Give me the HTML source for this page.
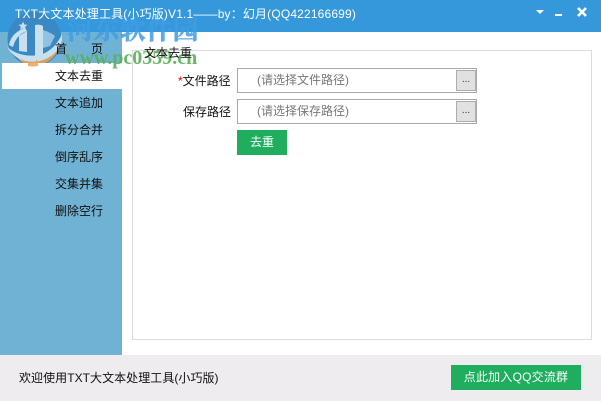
<!DOCTYPE html>
<html lang="zh">
<head>
<meta charset="utf-8">
<style>
*{box-sizing:border-box;margin:0;padding:0}
html,body{width:601px;height:401px;overflow:hidden;background:#fff}
body{position:relative;font-family:"Liberation Sans","Noto Sans CJK SC",sans-serif;font-size:12px;color:#111}
.a{position:absolute;white-space:nowrap;line-height:16px}
.input{position:absolute;left:237px;width:240px;height:25px;border:1px solid #a9a9a9;background:#fff}
.input span{position:absolute;left:19px;top:3px;line-height:16px;color:#777}
.input b{position:absolute;left:218px;top:1px;width:20px;height:21px;border:1px solid #adadad;background:#e1e1e1;font-weight:400;font-size:10px;line-height:17px;text-align:center;color:#333}
.nav{position:absolute;left:55px;line-height:16px;white-space:nowrap;color:#111}
.btn{position:absolute;background:#1fae5e;color:#fff;text-align:center}
</style>
</head>
<body>
<div style="position:absolute;left:0;top:0;width:601px;height:32px;background:#3498db"></div>
<div style="position:absolute;left:0;top:32px;width:122px;height:323px;background:#6fb2d3"></div>
<div style="position:absolute;left:0;top:355px;width:601px;height:46px;background:#eeecee"></div>
<div style="position:absolute;left:132px;top:50px;width:460px;height:290px;border:1px solid #dcdcdc"></div>

<svg style="position:absolute;left:0;top:0" width="70" height="70" viewBox="0 0 70 70">
<circle cx="34.500" cy="39" r="27" fill="#3a88c4"/>
<path d="M17 57Q40 68 60 44Q56 62 36 66Q24 67 17 57Z" fill="#d9a05a"/>
<path d="M7 47Q20 58 40 55Q55 50 62 34L62 40Q58 56 40 61Q18 65 7 47Z" fill="#c9e1ef"/>
<path d="M19 36L27 31L27 52L19 51Z" fill="#c9e1ef"/>
<path d="M35 25Q40 24 43 26L43 58L35 59Z" fill="#c9e1ef"/>
<path d="M9 45Q11 33 25 28L27 31Q16 35 13 47Z" fill="#c9e1ef"/>
<path d="M43 30Q52 33 55 36L50 46L43 48Z" fill="#8fc2e3"/>
<path d="M23 21.500l1.300 3 3.200.3-2.400 2 .8 3.200-2.900-1.700-2.900 1.700.8-3.200-2.400-2 3.200-.3z" fill="#c9e1ef"/>
<path d="M28 63Q36 63 37 59L38 66L28 66Z" fill="#e8a55e"/>
</svg>

<div style="position:absolute;left:2px;top:63px;width:120px;height:26px;background:#fff"></div>
<svg style="position:absolute;left:0;top:60px" width="70" height="10" viewBox="0 0 70 10">
<path d="M28 3L38 3L38 6Q33 7 28 6Z" fill="#f0b070"/>
</svg>

<div class="a" style="left:67px;top:16px;font:700 26px/30px 'Liberation Serif','Noto Serif CJK SC',serif;color:#3f9de4;opacity:.85;letter-spacing:.4px;-webkit-text-stroke:.6px #3f9de4">河东软件园</div>
<div class="a" style="left:65px;top:48px;font:700 20px/20px 'Liberation Serif',serif;color:#5cae5c;opacity:.9">www.pc0359.cn</div>

<div class="a" style="left:15px;top:6px;color:#fff;font-size:12px;letter-spacing:.16px">TXT大文本处理工具(小巧版)V1.1——by：幻月(QQ422166699)</div>

<svg style="position:absolute;left:530px;top:0" width="60" height="20" viewBox="0 0 60 20">
<path d="M6 10h8l-4 4z" fill="#fff"/>
<rect x="25" y="14" width="7" height="2" fill="#fff"/>
<path d="M48 8l8 8M56 8l-8 8" stroke="#fff" stroke-width="2.600" fill="none"/>
</svg>

<div class="nav" style="top:41px">首　　页</div>
<div class="nav" style="top:68px">文本去重</div>
<div class="nav" style="top:95px">文本追加</div>
<div class="nav" style="top:122px">拆分合并</div>
<div class="nav" style="top:149px">倒序乱序</div>
<div class="nav" style="top:176px">交集并集</div>
<div class="nav" style="top:203px">删除空行</div>

<div class="a" style="left:144px;top:45px">文本去重</div>
<div class="a" style="left:178px;top:73px"><span style="color:#e00">*</span>文件路径</div>
<div class="a" style="left:183px;top:104px">保存路径</div>
<div class="input" style="top:68px"><span>(请选择文件路径)</span><b>...</b></div>
<div class="input" style="top:99px"><span>(请选择保存路径)</span><b>...</b></div>
<div class="btn" style="left:237px;top:130px;width:50px;height:25px;line-height:25px">去重</div>

<div class="a" style="left:19px;top:370px;letter-spacing:.05px">欢迎使用TXT大文本处理工具(小巧版)</div>
<div class="btn" style="left:451px;top:365px;width:130px;height:25px;line-height:25px;letter-spacing:.2px">点此加入QQ交流群</div>
</body>
</html>
